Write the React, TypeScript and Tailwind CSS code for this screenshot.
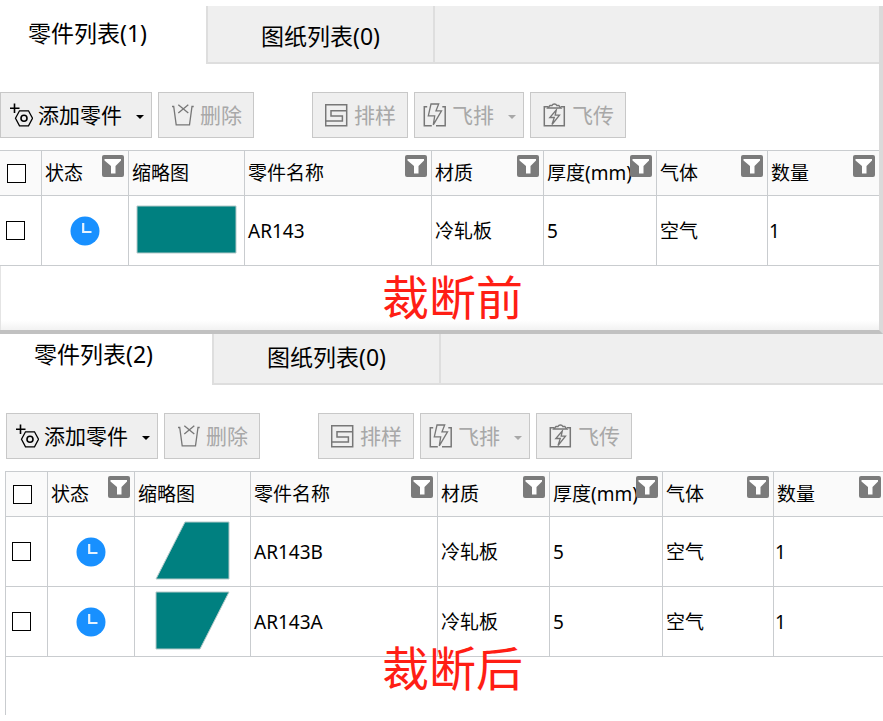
import clsx from 'clsx';
import { FC, ReactNode } from 'react';

type Shape = 'full' | 'cutLeft' | 'cutRight';

interface Part {
  name: string;
  material: string;
  thickness: number;
  gas: string;
  count: number;
  shape: Shape;
}

const columns = [
  { label: '状态', filter: true, width: 'w-[87px]' },
  { label: '缩略图', filter: false, width: 'w-[116px]' },
  { label: '零件名称', filter: true, width: 'w-[187px]' },
  { label: '材质', filter: true, width: 'w-[112px]' },
  { label: '厚度(mm)', filter: true, width: 'w-[113px]' },
  { label: '气体', filter: true, width: 'w-[111px]' },
  { label: '数量', filter: true, width: 'w-[112px]' },
];

const before: Part[] = [
  { name: 'AR143', material: '冷轧板', thickness: 5, gas: '空气', count: 1, shape: 'full' },
];

const after: Part[] = [
  { name: 'AR143B', material: '冷轧板', thickness: 5, gas: '空气', count: 1, shape: 'cutLeft' },
  { name: 'AR143A', material: '冷轧板', thickness: 5, gas: '空气', count: 1, shape: 'cutRight' },
];

const shapes: Record<Shape, string> = {
  full: '8,10 107,10 107,57 8,57',
  cutLeft: '50,5 94,5 94,62 21,62',
  cutRight: '21,5 94,5 65,62 21,62',
};

const Icon: FC<{ children: ReactNode }> = ({ children }) => (
  <svg
    className="size-6 shrink-0"
    viewBox="0 0 24 24"
    fill="none"
    stroke="currentColor"
    strokeWidth="1.3"
    aria-hidden="true"
  >
    {children}
  </svg>
);

const IconAdd = (
  <Icon>
    <path d="M5.500.500v9.500M1 5.200h9.500" strokeWidth="1.6" />
    <path d="M10.500 7.800h9l4 7.500-4 7.500h-9L6.500 15.300z" />
    <circle cx="15" cy="15.300" r="3" strokeWidth="1.6" />
  </Icon>
);

const IconDelete = (
  <Icon>
    <path d="M1 3.500h1.700L5.200 21.800h13.300L21 3.500h1.700" />
    <path d="M7.300 1.700l10 8.300M17.300 1.700L7.300 10" />
  </Icon>
);

const IconNest = (
  <Icon>
    <path d="M.7 1.700h21v21H.7z" strokeWidth="1.5" />
    <path d="M21.700 7.800H6v5.200h11.400v5H.7" strokeWidth="1.5" />
  </Icon>
);

const IconFlyNest = (
  <Icon>
    <path d="M4.200 3.700H1.300v19h7.500M19.300 3.700h2.900v19H13" strokeWidth="1.5" />
    <path d="M8 1h7.700L13 7.800h5.500l-8.200 14 1.400-9H5.300z" />
  </Icon>
);

const IconFlySend = (
  <Icon>
    <path d="M5 3.700H1.300v19h20v-19H18" strokeWidth="1.5" />
    <path d="M4.700 5L7 2.500h2c.8-2 4-2 4.800 0h2L18 5z" />
    <path d="M13.300 7l-6.500 7.500h4.500L9 21.500l7.500-9.300h-4.300z" />
  </Icon>
);

const ToolButton: FC<{
  icon: ReactNode;
  label: string;
  menu?: boolean;
  disabled?: boolean;
  className: string;
}> = ({ icon, label, menu, disabled, className }) => (
  <button
    type="button"
    disabled={disabled}
    className={clsx(
      'flex h-[46px] shrink-0 items-center gap-[5px] border border-[#c8c8c8] bg-[#efefef] text-[21px]',
      disabled ? 'text-[#a8a8a8]' : 'text-black',
      className,
    )}
  >
    <span className={clsx('shrink-0', disabled && 'text-[#777777]')}>{icon}</span>
    <span className="pt-0.5 whitespace-nowrap">{label}</span>
    {menu && (
      <svg
        className="mt-1 mr-[7px] ml-auto h-1 w-2 shrink-0"
        viewBox="0 0 8 4"
        fill="currentColor"
        aria-hidden="true"
      >
        <path d="M0 0h8L4 4z" />
      </svg>
    )}
  </button>
);

const Toolbar = () => (
  <div className="flex gap-1.5">
    <ToolButton icon={IconAdd} label="添加零件" menu className="w-[152px] pl-2" />
    <ToolButton icon={IconDelete} label="删除" disabled className="w-24 pl-3" />
    <ToolButton icon={IconNest} label="排样" disabled className="ml-[52px] w-24 pl-3" />
    <ToolButton icon={IconFlyNest} label="飞排" menu disabled className="w-[110px] pl-2" />
    <ToolButton icon={IconFlySend} label="飞传" disabled className="w-24 pl-3" />
  </div>
);

const Tabs: FC<{ count: number; first: string }> = ({ count, first }) => (
  <div role="tablist" className="flex h-[58px] text-[23px]">
    <button
      type="button"
      role="tab"
      aria-selected="true"
      className={clsx('shrink-0 pb-1 text-left', first)}
    >
      零件列表({count})
    </button>
    <button
      type="button"
      role="tab"
      aria-selected="false"
      className="w-[227px] shrink-0 border-b-2 border-l-2 border-[#dedede] bg-[#efefef] pt-1"
    >
      图纸列表(0)
    </button>
    <div className="grow border-b-2 border-l-2 border-[#dedede] bg-[#efefef]" />
  </div>
);

const Checkbox: FC<{ label: string }> = ({ label }) => (
  <input
    type="checkbox"
    aria-label={label}
    className="block size-[19px] appearance-none border border-black bg-white"
  />
);

const FilterButton: FC<{ label: string }> = ({ label }) => (
  <button
    type="button"
    aria-label={`筛选${label}`}
    className="absolute top-1 right-1 size-[22px] rounded-[2px] bg-[#7b7b7b] text-white"
  >
    <svg viewBox="0 0 22 22" fill="currentColor" aria-hidden="true">
      <path d="M2.500 4h16.500v1.500L13.500 11v7.500L9 18.500V11L2.500 5.500z" />
    </svg>
  </button>
);

const line = 'border-r border-b border-[#c9cccf]';
const cell = `${line} px-[3px]`;

const PartsTable: FC<{ parts: Part[] }> = ({ parts }) => (
  <table className="w-[880px] table-fixed border-separate border-spacing-0 border-t border-[#c9cccf] text-left text-[19px] leading-6">
    <thead>
      <tr className="h-[45px] bg-[#fafafa]">
        <th className={clsx(line, 'w-[42px] pl-[7px]')}>
          <Checkbox label="全选" />
        </th>
        {columns.map(({ label, filter, width }) => (
          <th key={label} className={clsx(cell, 'relative font-normal whitespace-nowrap', width)}>
            {label}
            {filter && <FilterButton label={label} />}
          </th>
        ))}
      </tr>
    </thead>
    <tbody>
      {parts.map(({ name, material, thickness, gas, count, shape }) => (
        <tr key={name} className="h-[70px]">
          <td className={clsx(line, 'pl-1.5')}>
            <Checkbox label={name} />
          </td>
          <td className={cell}>
            <svg className="mx-auto size-[30px]" viewBox="0 0 30 30" aria-hidden="true">
              <circle cx="15" cy="15" r="14.500" fill="#1890ff" />
              <path d="M13.200 7v9H21.500" fill="none" stroke="#e6f3ff" strokeWidth="2.200" />
            </svg>
          </td>
          <td className={clsx(line, 'p-0')}>
            <svg className="block h-[69px] w-[115px]" viewBox="0 0 115 69" aria-hidden="true">
              <polygon points={shapes[shape]} fill="#008080" stroke="#b5c9c9" strokeWidth="1" />
            </svg>
          </td>
          <td className={cell}>{name}</td>
          <td className={cell}>{material}</td>
          <td className={cell}>{thickness}</td>
          <td className={cell}>{gas}</td>
          <td className={clsx(line, 'pl-px')}>{count}</td>
        </tr>
      ))}
    </tbody>
  </table>
);

const Caption: FC<{ children: ReactNode }> = ({ children }) => (
  <p className="text-[47px] leading-[62px] text-[#ff1e14]">{children}</p>
);

export default function App() {
  return (
    <main className="overflow-hidden bg-white pt-1.5 font-['Noto_Sans','Noto_Sans_CJK_SC',sans-serif] text-black">
      {/* upper window overlaps the top of the lower one */}
      <section className="relative z-10 border-r-4 border-b-4 border-r-[#dadada] border-b-[#c1c1c1] bg-white">
        <Tabs count={1} first="w-[206px] pl-7" />
        <div className="pt-7 pb-3">
          <Toolbar />
        </div>
        <div className="overflow-hidden">
          <PartsTable parts={before} />
          <div className="h-16 border-l border-[#e4e4e4] bg-linear-to-t from-[#f2f2f2] to-white to-15% pl-[381px]">
            <Caption>裁断前</Caption>
          </div>
        </div>
      </section>
      <section className="-mt-[7px]">
        <Tabs count={2} first="w-[212px] pl-[34px]" />
        <div className="pt-7 pb-3 pl-1.5">
          <Toolbar />
        </div>
        <div className="ml-[5px] overflow-hidden border-l border-[#c9cccf]">
          <PartsTable parts={after} />
          <div className="h-[58px] pl-[376px]">
            <div className="relative -top-5">
              <Caption>裁断后</Caption>
            </div>
          </div>
        </div>
      </section>
    </main>
  );
}
